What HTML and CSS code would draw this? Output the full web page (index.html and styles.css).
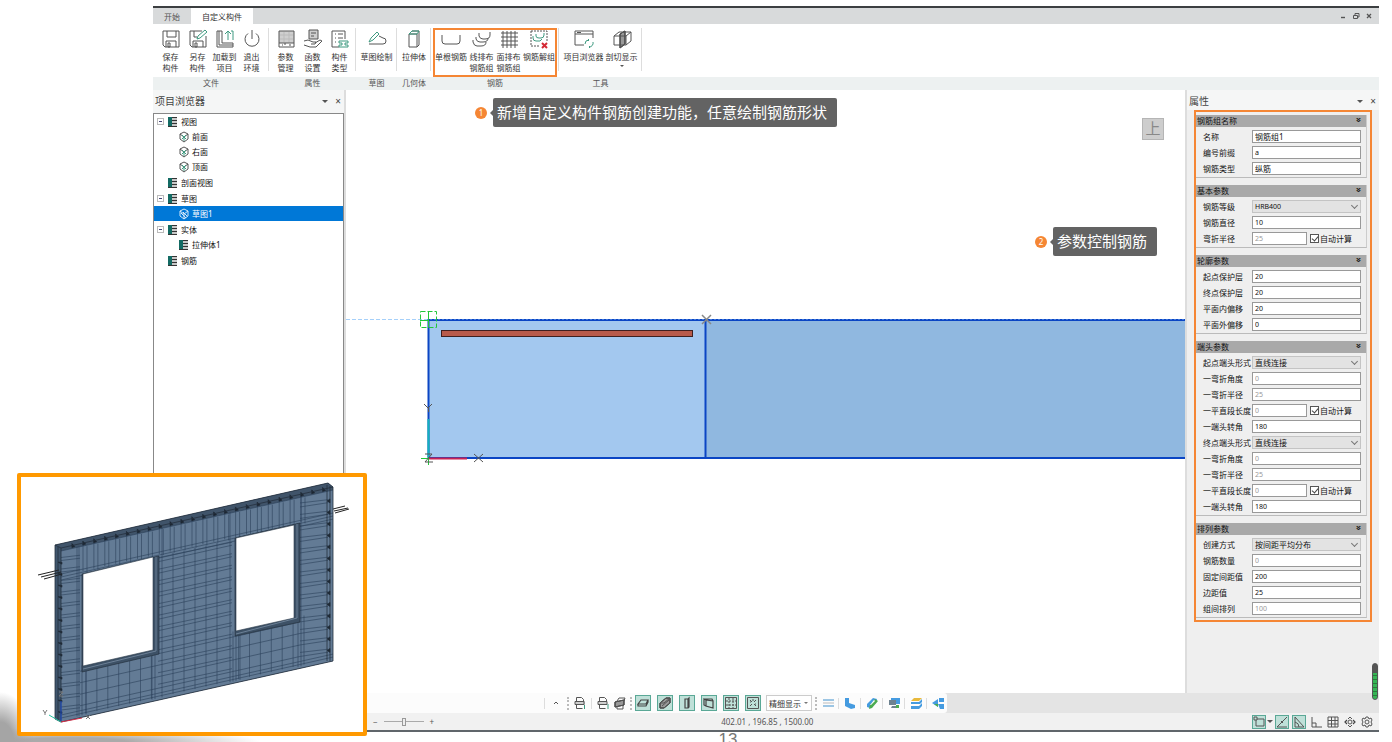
FILE: index.html
```html
<!DOCTYPE html>
<html lang="zh-CN">
<head>
    <meta charset="UTF-8">
    <meta name="viewport" content="width=device-width, initial-scale=1.0">
    <title>自定义构件</title>
    <link rel="stylesheet" href="styles.css">
</head>
<body>
    <div class="app">
        <!-- 标题栏 -->
        <header class="tabs">
            <button class="tab">开始</button>
            <button class="tab active">自定义构件</button>
            <div class="win-btns">
                <button aria-label="最小化"><svg width="8" height="8"><path d="M2 5.5h4" stroke-width="1.4"/></svg></button>
                <button aria-label="还原"><svg width="8" height="8"><path d="M1.5 3.5h4v3h-4zM3 3V1.5h4V5H6"/></svg></button>
                <button aria-label="关闭"><svg width="8" height="8"><path d="M2 2l4 4M6 2L2 6" stroke-width="1.3"/></svg></button>
            </div>
        </header>

        <!-- 功能区 -->
        <nav class="ribbon">
            <div class="group file">
                <div class="btns">
                    <button><svg width="20" height="20"><path d="M2 2h16v16H4l-2-2zM6 2v6h9V2M5 18v-6h10v6M7 14h2v4H7z"/></svg>保存<br>构件</button>
                    <button><svg width="20" height="20"><path d="M14 2H2v14l2 2h14V7M6 2v6h3M5 18v-6h10v6M7 14h2v4H7z"/><path class="green" d="M9 10l1-3 7-6 2 2-7 6z"/></svg>另存<br>构件</button>
                    <button><svg width="20" height="20"><path d="M7 2H2v16h16v-4H7zM4 2v14h14"/><path class="green" d="M13 11V2M10 5l3-3 3 3M16 2h2v9"/></svg>加载到<br>项目</button>
                    <button><svg width="20" height="20"><path d="M6 4.500a7 7 0 1 0 8 0M10 1v9"/></svg>退出<br>环境</button>
                </div>
                <div class="name">文件</div>
            </div>
            <div class="group attr">
                <div class="btns">
                    <button><svg width="20" height="20"><path class="shade" d="M3 2h15v12H3z"/><path d="M3 2h15v16H3zM3 14h15M9 14v2M13 16h2M6 16h1"/><path class="ltgrey" d="M8 3v10M13 3v10M4 6h13M4 10h13"/></svg>参数<br>管理</button>
                    <button><svg width="20" height="20"><path class="shade" d="M6 1h9v9H6z"/><path d="M6 1h9v9H6zM8 4h5M8 7h3M1 12l4-1 5 2h3l-1 2H8M12 14l5-3 2 1-6 6H7l-6-2"/></svg>函数<br>设置</button>
                    <button><svg width="20" height="20"><path d="M9 18H2V2h13v8M5 5h1M8 5h5M5 9h1M8 9h5M5 13h1"/><path class="green" d="M9 12h9v2h-3v2h3v2H9v-2h3v-2H9z"/></svg>构件<br>类型</button>
                </div>
                <div class="name">属性</div>
            </div>
            <div class="group sketch">
                <div class="btns">
                    <button><svg width="20" height="20"><path d="M2 15h14a3 3 0 0 0 0-6l-4-2"/><path class="green" d="M2 13l2-4 6-6 2 2-6 6z"/></svg>草图绘制</button>
                </div>
                <div class="name">草图</div>
            </div>
            <div class="group solid">
                <div class="btns">
                    <button><svg width="20" height="20"><path d="M5 5h8v13H5zM13 18l2-2V2H8L5 5"/><path class="green" d="M5 5l3-3h7l-2 3z"/></svg>拉伸体</button>
                </div>
                <div class="name">几何体</div>
            </div>
            <div class="group rebar">
                <div class="btns">
                    <button><svg width="20" height="20"><path d="M1 6v6q0 3 3 3h12q3 0 3-3V6"/></svg>单根钢筋</button>
                    <button class="mid"><svg width="20" height="20"><path d="M1 11v2q1 4 4 4h4q5 0 5-4M4 8v2q1 3 4 3h3q5 0 5-4M7 4v3q1 3 4 3h2q5 0 5-4V3"/></svg>线排布<br>钢筋组</button>
                    <button class="mid"><svg width="20" height="20"><path d="M4 2v17M8 2v17M12 2v17M16 2v17M2 4h17M2 8h17M2 12h17M2 16h17"/></svg>面排布<br>钢筋组</button>
                    <button><svg width="20" height="20"><path d="M2 2h16v10M2 2v15h9" stroke-dasharray="2 1"/><path class="green" d="M4 7v2q0 3 3 3h4l2-2M7 5v2q0 2 3 2h2q3 0 3-3V4"/><path class="red" d="M13 14l5 5M18 14l-5 5"/></svg>钢筋解组</button>
                </div>
                <div class="name">钢筋</div>
            </div>
            <div class="group tools">
                <div class="btns">
                    <button class="wide"><svg width="20" height="20"><path d="M10 16H1V2h18v7M1 5h18M3 3.500h4"/><path class="green" d="M11 15a4 4 0 0 1 4-4l-1-1M15 11l-1 1M19 13a4 4 0 0 1-4 5l1 1M15 18l1-1"/></svg>项目浏览器</button>
                    <button><svg width="20" height="20"><path class="shade dark" d="M8 5l5-3v13l-5 4z"/><path d="M2 7h12v9H2zM2 7l5-4h12l-5 4M19 3v9l-5 4M8 5v14l5-4V2z"/></svg>剖切显示<br><span class="caret"></span></button>
                </div>
                <div class="name">工具</div>
            </div>
            <div class="group rest"><div class="btns"></div><div class="name"></div></div>
        </nav>

        <main class="work">
            <!-- 项目浏览器 -->
            <aside class="browser">
                <div class="panel-title">项目浏览器<span class="caret"></span><button aria-label="关闭">×</button></div>
                <ul class="tree">
                    <li>
                        <div class="node"><i class="toggle"></i><i class="list"></i>视图</div>
                        <ul>
                            <li class="node"><svg width="12" height="12"><path d="M6 1l4 2v5l-4 3-4-3V3zM2 3l4 3 4-3"/><path class="green" d="M6 6v4M4 4l4 4M8 4L4 8"/></svg>前面</li>
                            <li class="node"><svg width="12" height="12"><path d="M6 1l4 2v5l-4 3-4-3V3zM2 3l4 3 4-3"/><path class="green" d="M6 6v4M4 4l4 4M8 4L4 8"/></svg>右面</li>
                            <li class="node"><svg width="12" height="12"><path d="M6 1l4 2v5l-4 3-4-3V3zM2 3l4 3 4-3"/><path class="green" d="M6 6v4M4 4l4 4M8 4L4 8"/></svg>顶面</li>
                        </ul>
                    </li>
                    <li><div class="node"><i class="toggle none"></i><i class="list"></i>剖面视图</div></li>
                    <li>
                        <div class="node"><i class="toggle"></i><i class="list"></i>草图</div>
                        <ul>
                            <li class="node selected"><svg width="12" height="12"><path d="M6 1l4 2v5l-4 3-4-3V3zM2 3l4 3 4-3M6 6v5M3 5l5 5M5 4l4 4"/></svg>草图1</li>
                        </ul>
                    </li>
                    <li>
                        <div class="node"><i class="toggle"></i><i class="list"></i>实体</div>
                        <ul>
                            <li class="node"><i class="list"></i>拉伸体1</li>
                        </ul>
                    </li>
                    <li><div class="node"><i class="toggle none"></i><i class="list"></i>钢筋</div></li>
                </ul>
            </aside>

            <!-- 绘图区 -->
            <section class="canvas">
                <svg class="drawing" width="100%" height="100%">
                    <g transform="translate(-346 -90)">
                        <path class="guide" d="M346 319.500h82"/>
                        <rect class="face" x="428" y="319" width="277" height="139"/>
                        <rect class="face right" x="705" y="319" width="100%" height="139"/>
                        <rect class="edge" x="428.500" y="320" width="200%" height="138"/>
                        <path class="edge" d="M705.500 320v138"/>
                        <path class="edge-dash" d="M430 319.500h1800"/>
                        <rect class="bar" x="441.500" y="330.500" width="251" height="6"/>
                        <path class="snap" d="M420.500 311.500h16v16h-16z" stroke-dasharray="5 2"/>
                        <path class="snap" d="M428.500 311v16M420 320.500h9M428.500 453v12M421 458.500h8"/>
                        <path class="axis-y" d="M428.500 419v38"/>
                        <path class="axis-x" d="M429 458.500h38"/>
                        <path class="mark" d="M424 404l4 4 4-4M428.500 408v4M474 454l9 8M483 454l-9 8M425 454h7l-7 8h8"/>
                        <path class="mark light" d="M702 315l9 9M711 315l-9 9"/>
                    </g>
                </svg>
                <div class="callout one"><b>1</b><p>新增自定义构件钢筋创建功能，任意绘制钢筋形状</p></div>
                <div class="callout two"><b>2</b><p>参数控制钢筋</p></div>
                <div class="view-cube">上</div>
            </section>

            <!-- 属性 -->
            <aside class="props">
                <div class="panel-title">属性<span class="caret"></span><button aria-label="关闭">×</button></div>
                <form class="sections">
                    <fieldset>
                        <h3>钢筋组名称<span>»</span></h3>
                        <div class="row"><label for="p1">名称</label><input id="p1" type="text" value="钢筋组1"></div>
                        <div class="row"><label for="p2">编号前缀</label><input id="p2" class="num" type="text" value="a"></div>
                        <div class="row"><label for="p3">钢筋类型</label><input id="p3" type="text" value="纵筋"></div>
                    </fieldset>
                    <fieldset>
                        <h3>基本参数<span>»</span></h3>
                        <div class="row"><label for="p4">钢筋等级</label><div class="select"><select id="p4" class="num"><option>HRB400</option></select></div></div>
                        <div class="row"><label for="p5">钢筋直径</label><input id="p5" class="num" type="text" value="10"></div>
                        <div class="row"><label for="p6">弯折半径</label><input id="p6" class="num short" type="text" value="25" disabled><label class="auto"><input type="checkbox" checked>自动计算</label></div>
                    </fieldset>
                    <fieldset>
                        <h3>轮廓参数<span>»</span></h3>
                        <div class="row"><label for="p7">起点保护层</label><input id="p7" class="num" type="text" value="20"></div>
                        <div class="row"><label for="p8">终点保护层</label><input id="p8" class="num" type="text" value="20"></div>
                        <div class="row"><label for="p9">平面内偏移</label><input id="p9" class="num" type="text" value="20"></div>
                        <div class="row"><label for="p10">平面外偏移</label><input id="p10" class="num" type="text" value="0"></div>
                    </fieldset>
                    <fieldset>
                        <h3>端头参数<span>»</span></h3>
                        <div class="row"><label for="p11">起点端头形式</label><div class="select"><select id="p11"><option>直线连接</option></select></div></div>
                        <div class="row"><label for="p12">一弯折角度</label><input id="p12" class="num" type="text" value="0" disabled></div>
                        <div class="row"><label for="p13">一弯折半径</label><input id="p13" class="num" type="text" value="25" disabled></div>
                        <div class="row"><label for="p14">一平直段长度</label><input id="p14" class="num short" type="text" value="0" disabled><label class="auto"><input type="checkbox" checked>自动计算</label></div>
                        <div class="row"><label for="p15">一端头转角</label><input id="p15" class="num" type="text" value="180"></div>
                        <div class="row"><label for="p16">终点端头形式</label><div class="select"><select id="p16"><option>直线连接</option></select></div></div>
                        <div class="row"><label for="p17">一弯折角度</label><input id="p17" class="num" type="text" value="0" disabled></div>
                        <div class="row"><label for="p18">一弯折半径</label><input id="p18" class="num" type="text" value="25" disabled></div>
                        <div class="row"><label for="p19">一平直段长度</label><input id="p19" class="num short" type="text" value="0" disabled><label class="auto"><input type="checkbox" checked>自动计算</label></div>
                        <div class="row"><label for="p20">一端头转角</label><input id="p20" class="num" type="text" value="180"></div>
                    </fieldset>
                    <fieldset>
                        <h3>排列参数<span>»</span></h3>
                        <div class="row"><label for="p21">创建方式</label><div class="select"><select id="p21"><option>按间距平均分布</option></select></div></div>
                        <div class="row"><label for="p22">钢筋数量</label><input id="p22" class="num" type="text" value="0" disabled></div>
                        <div class="row"><label for="p23">固定间距值</label><input id="p23" class="num" type="text" value="200"></div>
                        <div class="row"><label for="p24">边距值</label><input id="p24" class="num" type="text" value="25"></div>
                        <div class="row"><label for="p25">组间排列</label><input id="p25" class="num" type="text" value="100" disabled></div>
                    </fieldset>
                </form>
                <div class="gauge"></div>
            </aside>
        </main>

        <!-- 显示工具条 -->
        <div class="toolbar">
            <div class="tools-strip">
                <i class="sep"></i>
                <button aria-label="展开"><svg width="14" height="14"><path d="M5 8l2-2 2 2"/></svg></button>
                <i class="grip"></i>
                <button aria-label="导入"><svg width="14" height="14"><path class="shade" d="M2 5h10v4H2z"/><path d="M3.500 5V1.500h5l2 2V5M2 5.500h9v3H2zM3.500 9v3.500h6"/><path class="green" d="M11.500 9v4"/></svg></button>
                <i class="sep"></i>
                <button aria-label="导出"><svg width="14" height="14"><path class="shade" d="M2 5h9v4H2z"/><path d="M3.500 5V1.500h5l2 2V5M2 5.500h9v3H2zM3.500 9v3.500h6"/><path class="green" d="M12 8v5"/></svg></button>
                <button class="print" aria-label="打印"><svg width="14" height="14"><path class="shade dark" d="M2 6l9-2v5l-9 2z"/><path d="M4 5l2-3h6l-1 3M2 6l9-2v5l-9 2zM4 11v2h6V9"/></svg></button>
                <i class="grip"></i>
                <button class="on" aria-label="板"><svg width="14" height="14"><path class="bold" d="M2 8l3-4h7l-2 4zM2 8v2h8l2-4V4"/></svg></button>
                <button class="on" aria-label="墙"><svg width="14" height="14"><path class="shade dark" d="M2 7l6-5h4v5l-6 5H2z"/><path d="M2 7l6-5h4L6 7zM2 7v5h4l6-5V2M4 10l7-6"/></svg></button>
                <button class="on" aria-label="柱"><svg width="14" height="14"><path class="bold" d="M5 3h3v9H5zM8 3l1-1v9l-1 1"/></svg></button>
                <button class="on" aria-label="梁"><svg width="14" height="14"><path class="bold" d="M4 4v6l7 2V5zM4 4L2 3v6l2 1M2 3h8l1 2"/></svg></button>
                <button class="on" aria-label="网格"><svg width="14" height="14"><path d="M1.500 1.500h11v11h-11z"/><path d="M2 5h10M2 9h10M5 2v10M9 2v10" stroke-dasharray="2 1"/></svg></button>
                <button class="on" aria-label="节点"><svg width="14" height="14"><path d="M1.500 1.500h11v11h-11z"/><path d="M4 4l2 2M10 4L8 6M4 10l2-2M10 10L8 8M4 6h1M9 8h1M6 4h2"/></svg></button>
                <div class="select detail"><select aria-label="显示精度"><option>精细显示</option></select></div>
                <i class="grip"></i>
                <button class="far" aria-label="标注"><svg width="14" height="14"><path class="blue" d="M2 4h11M2 10h11"/><path class="ltgrey" d="M2 7h11"/></svg></button>
                <i class="sep"></i>
                <button class="far" aria-label="角钢"><svg width="14" height="14"><path class="bluefill" d="M2 2h4v5l6 2v3l-4 1-6-3z"/></svg></button>
                <i class="sep"></i>
                <button class="far" aria-label="编辑"><svg width="14" height="14"><path class="bluefill" d="M2 8l6-6 4 1-1 4-6 5-3-1z"/><path class="greenfill" d="M5 9l5-6 3 2-6 7-3 1z"/><path class="whitefill" d="M5 9l4-5 1 1-4 4z"/></svg></button>
                <i class="sep"></i>
                <button class="far" aria-label="显示器"><svg width="14" height="14"><path class="bluefill" d="M4 2h9v6H4z"/><path class="greyfill" d="M2 4h7v5H2zM5 10h5v2H4z"/><path class="greenfill" d="M9 9h3v3H9z"/></svg></button>
                <i class="sep"></i>
                <button class="far" aria-label="图层"><svg width="14" height="14"><path class="yellowfill" d="M2 5l3-3h8l-3 3z"/><path class="bluefill" d="M2 6h8l3-3v3l-2 2H2zM2 10h8l3-3v3l-3 3H2z"/></svg></button>
                <i class="sep"></i>
                <button class="far" aria-label="共享"><svg width="14" height="14"><path class="bluefill" d="M1 7l6-4v8zM8 2h5v4H8zM7 8h6v5H9z"/><path class="greenfill" d="M3 8h4v3z"/></svg></button>
            </div>
        </div>

        <!-- 状态栏 -->
        <footer class="status">
            <div class="zoom"><span>−</span><input type="range" aria-label="缩放" value="50"><span>+</span></div>
            <div class="coords">402.01 , 196.85 , 1500.00</div>
            <div class="modes">
                <button class="on" aria-label="捕捉"><svg width="12" height="12"><path d="M1 1h3v3H1zM4 3h7v7H3V4"/></svg></button>
                <span class="caret"></span>
                <button class="on" aria-label="端点"><svg width="12" height="12"><path d="M1 11L11 1M5 5l2 2M1 11h10"/></svg></button>
                <button class="on" aria-label="极轴"><svg width="12" height="12"><path d="M2 1v10h9M2 1l9 10M2 6q4 1 4 5"/></svg></button>
                <button aria-label="正交"><svg width="12" height="12"><path d="M2 1v10h10M2 7h4v4"/></svg></button>
                <button aria-label="栅格"><svg width="12" height="12"><path d="M1 1h10v10H1zM1 4.500h10M1 8h10M4.500 1v10M8 1v10"/></svg></button>
                <button aria-label="移动"><svg width="12" height="12"><path d="M6 4a2 2 0 1 0 0 4 2 2 0 0 0 0-4zM4 3l2-2 2 2M4 9l2 2 2-2"/><path class="bold" d="M3 4L1 6l2 2M9 4l2 2-2 2"/></svg></button>
                <button aria-label="设置"><svg width="12" height="12"><path d="M5 1h2l1 2 2-1 1 2-1 2 1 2-1 2-2-1-1 2H5L4 9l-2 1-1-2 1-2-1-2 1-2 2 1zM6 4a2 2 0 1 0 0 4 2 2 0 0 0 0-4z"/></svg></button>
            </div>
        </footer>
    </div>
    <div class="page-no">13</div>

    <!-- 三维预览 -->
    <div class="mist"></div>
    <div class="preview">
        <svg viewBox="21 477 342 255">
            <defs>
                <clipPath id="wall"><path clip-rule="evenodd" d="M61 548L333 487V661L61 722zM82 574V672L159 654V556zM235 538V636L300 622V523z"/></clipPath>
            </defs>
            <path class="side" d="M55 545L328 483L333 487V661L61 722L55 719z"/>
            <path class="front" d="M61 548L333 487V661L61 722z"/>
            <path class="top-face" d="M55 545L328 483L333 487V490L61 551z"/>
            <g id="mesh" clip-path="url(#wall)"></g>
            <g id="ties"></g>
            <path class="frame" d="M82 574L159 556V654L82 672zM235 538L300 523V622L235 636z"/>
            <path class="hole" d="M83 574L153 557V650L83 666zM236 538L294 525V618L236 631z"/>
            <path class="frame-line" d="M156 557v94L83 669M297 524v94L236 634"/>
            <path class="dark" d="M38 575l21-5M41 577l20-5M44 579l18-5M333 509l12-3M334 511l14-3M335 513l14-4"/>
            <path class="outline" d="M55 545L328 483L333 487L61 548zM55 545V719L61 722V548M61 722L333 661V487M58 547V720M327 485V661M330 486V661"/>
            <path d="M61 721V701" stroke="#1d4fd0"/>
            <path d="M61 722L82 718" stroke="#d8304a"/>
            <path d="M61 722L49 715" stroke="#25c2a0"/>
            <path d="M43 710l2 3 2-3M45 713v2M86 715l4 4M90 715l-4 4M59 692h4l-4 4h4" stroke="#777"/>
        </svg>
    </div>
    <script src="mesh.js"></script>
</body>
</html>
```
FILE: styles.css
```css
* {
    box-sizing: border-box;
}
body {
    margin: 0;
    position: relative;
    min-height: 100vh;
    overflow: hidden;
    background: white;
    color: #333;
    font-family: "Noto Sans", "Noto Sans CJK SC", sans-serif;
    font-size: 8px;
    line-height: 11px;
}
button, input, select {
    font-family: inherit;
    font-size: 8px;
    line-height: 11px;
    color: inherit;
}
button {
    margin: 0;
    padding: 0;
    border: none;
    background: none;
}
svg {
    display: block;
    fill: none;
    stroke: #555;
    stroke-width: 1;
}
ul {
    margin: 0;
    padding: 0;
    list-style: none;
}
.green { stroke: #3f9a80; }
.red { stroke: #d42a35; stroke-width: 2; }
.shade { fill: #cfcfcf; stroke: none; }
.shade.dark { fill: #999; }
.bold { stroke: #444; stroke-width: 1.2; }
.blue { stroke: #7eb4dc; stroke-width: 1.5; }
.ltgrey { stroke: #bbb; }
.bluefill { fill: #459be0; stroke: none; }
.greenfill { fill: #4cab50; stroke: none; }
.greyfill { fill: #6d8290; stroke: none; }
.yellowfill { fill: #e8b93c; stroke: none; }
.whitefill { fill: white; stroke: none; }
.caret {
    display: inline-block;
    border: 3px solid transparent;
    border-top-color: #555;
    border-bottom: none;
}

.app {
    display: flex;
    flex-direction: column;
    min-height: calc(100vh - 16px);
    margin: 6px 13px 0 153px;
    border-top: 2px solid #3c3f41;
    border-bottom: 2px solid #60666b;
}

/* 标题栏 */
.tabs {
    display: flex;
    height: 16px;
    background: #d8dadb;
}
.tab {
    width: 38px;
    color: #555;
}
.tab.active {
    width: 62px;
    background: white;
    color: #333;
}
.win-btns {
    display: flex;
    gap: 5px;
    align-items: center;
    margin-left: auto;
    padding-right: 6px;
}

/* 功能区 */
.ribbon {
    display: flex;
    height: 66px;
    background: white;
}
.group {
    position: relative;
    display: flex;
    flex-direction: column;
}
.btns {
    display: flex;
    justify-content: center;
    flex: 1;
    padding-top: 5px;
}
.btns::after {
    content: "";
    position: absolute;
    top: 4px;
    right: 0;
    height: 43px;
    border-right: 1px solid #ddd;
}
.btns button {
    display: block;
    width: 27px;
    align-self: flex-start;
    text-align: center;
    white-space: nowrap;
}
.btns svg {
    margin: 0 auto 2px;
}
.btns .caret {
    border-width: 2px;
    border-bottom: none;
    vertical-align: 4px;
}
.name {
    height: 13px;
    background: #edf1f1;
    text-align: center;
    line-height: 12px;
    color: #555;
}
.file { width: 116px; }
.attr { width: 87px; }
.sketch { width: 41px; }
.solid { width: 34px; }
.rebar { width: 128px; }
.tools { width: 83px; }
.rest { flex: 1; }
.rest .btns::after { display: none; }
.sketch button, .rebar button, .tools button {
    width: 34px;
}
.rebar .mid { width: 27px; }
.tools .wide { width: 42px; }
.rebar::after {
    content: "";
    position: absolute;
    inset: 4px 2px 13px 2px;
    border: 2px solid #f58634;
}

/* 工作区 */
.work {
    display: flex;
    flex: 1;
}
.panel-title {
    display: flex;
    align-items: center;
    gap: 6px;
    height: 23px;
    padding: 0 2px;
    background: #f5f6f6;
    font-size: 10px;
    color: #444;
}
.panel-title .caret {
    margin-left: auto;
}
.panel-title button {
    width: 8px;
    font-size: 10px;
}
.browser {
    display: flex;
    flex-direction: column;
    width: 193px;
    border-right: 2px solid #ddd;
}
.tree {
    flex: 1;
    border: 1px solid #888;
    border-bottom: none;
    background: white;
    color: #111;
}
.tree > li {
    margin-bottom: 1px;
}
.node {
    display: flex;
    align-items: center;
    gap: 4px;
    height: 15px;
    padding-left: 3px;
}
.tree ul .node {
    gap: 2px;
    padding-left: 24px;
}
.node.selected {
    background: #0078d7;
    color: white;
}
.selected svg {
    stroke: #d5e8f8;
}
.tree ul .list {
    margin: 0 2px 0 1px;
}
.toggle {
    width: 7px;
    height: 7px;
    border: 1px solid #bbb;
    background: linear-gradient(#447, #447) center / 3px 1px no-repeat;
}
.toggle.none {
    visibility: hidden;
}
.list {
    width: 9px;
    height: 10px;
    background: linear-gradient(90deg, #136b64 4px, transparent 4px), repeating-linear-gradient(#333 0 1px, #c8c8c8 1px 3px);
    border-bottom: 1px solid #333;
}

/* 绘图区 */
.canvas {
    position: relative;
    flex: 1;
    min-width: 0;
    overflow: hidden;
    border-right: 2px solid #ddd;
}
.drawing {
    position: absolute;
    inset: 0;
}
.guide { stroke: #a5d0fa; stroke-dasharray: 4 2; }
.face { fill: #a3c8ef; stroke: none; }
.face.right { fill: #90b8e0; }
.edge { stroke: #0b45c4; stroke-width: 2; }
.edge-dash { stroke: #3f78dc; stroke-dasharray: 2 2; }
.bar { fill: #b85b4b; stroke: #3e2020; }
.snap { stroke: #21c63a; }
.axis-y { stroke: #13b3bd; stroke-width: 2; }
.axis-x { stroke: #c82355; stroke-width: 2; }
.mark { stroke: #555; }
.mark.light { stroke: #888; stroke-width: 1.5; }
.callout {
    position: absolute;
    display: flex;
    align-items: center;
    gap: 6px;
}
.callout.one {
    left: 129px;
    top: 8px;
}
.callout.two {
    right: 28px;
    top: 137px;
}
.callout b {
    width: 12px;
    height: 12px;
    border-radius: 50%;
    background: #f58634;
    color: white;
    text-align: center;
    font-weight: normal;
    line-height: 12px;
}
.callout p {
    position: relative;
    margin: 0;
    padding: 0 10px 0 4px;
    border-radius: 2px;
    background: #636363;
    color: white;
    font-size: 15px;
    line-height: 29px;
}
.callout p::before {
    content: "";
    position: absolute;
    left: -3px;
    top: 12px;
    border: 3px solid transparent;
    border-right-color: #636363;
    border-left: none;
}
.view-cube {
    position: absolute;
    right: 21px;
    top: 28px;
    width: 22px;
    height: 22px;
    border: 1px solid #b5b5b5;
    background: #cdcdcd;
    color: #888;
    font-size: 15px;
    line-height: 19px;
    text-align: center;
}

/* 属性 */
.props {
    position: relative;
    width: 192px;
    padding-bottom: 60px;
    background: #efefef;
}
.props .panel-title {
    height: 20px;
    padding-top: 2px;
}
.sections {
    display: flex;
    flex-direction: column;
    gap: 7px;
    margin: 0 7px;
    padding: 3px 3px 2px 0;
    border: 2px solid #f58634;
    color: #111;
}
fieldset {
    min-width: 0;
    margin: 0;
    padding: 0 0 1px;
    border: none;
    border-bottom: 1px solid #bbb;
    border-right: 1px solid #ccc;
}
h3 {
    display: flex;
    justify-content: space-between;
    height: 12px;
    margin: 0 0 1px;
    padding: 0 3px 0 1px;
    background: #a9a9a9;
    font-size: 8px;
    font-weight: normal;
    line-height: 12px;
}
h3 span {
    width: 8px;
    height: 10px;
    transform: rotate(90deg);
    font-weight: bold;
    line-height: 10px;
    text-align: center;
}
.row {
    display: flex;
    align-items: center;
    height: 16px;
    padding: 0 5px 0 7px;
    white-space: nowrap;
}
.row > label:first-child {
    width: 49px;
}
.row > input, .select {
    flex: 1;
    min-width: 0;
    height: 13px;
}
.row > input, select {
    padding: 0 2px;
    border: 1px solid #999;
    border-radius: 0;
    background: white;
}
.row > .short {
    flex: none;
    width: 55px;
}
.row .num {
    font-size: 7px;
}
input:disabled {
    color: #999;
}
.select {
    position: relative;
}
select {
    display: block;
    appearance: none;
    width: 100%;
    height: 100%;
}
.row select {
    border-color: #c4c4c4;
    background: #e3e3e3;
}
.row .select::after {
    content: "";
    position: absolute;
    right: 4px;
    top: 3px;
    width: 4px;
    height: 4px;
    border: solid #777;
    border-width: 0 1px 1px 0;
    transform: rotate(45deg);
    pointer-events: none;
}
.auto {
    display: flex;
    align-items: center;
    gap: 1px;
    margin-left: 3px;
}
.auto input {
    position: relative;
    appearance: none;
    width: 9px;
    height: 9px;
    margin: 0;
    border: 1px solid #555;
    background: white;
}
.auto input:checked::after {
    content: "";
    position: absolute;
    left: 2px;
    top: 0;
    width: 3px;
    height: 5px;
    border: solid #444;
    border-width: 0 1px 1px 0;
    transform: rotate(40deg);
}
.gauge {
    position: absolute;
    right: 1px;
    bottom: -7px;
    width: 6px;
    height: 37px;
    border: 1px solid #555;
    border-radius: 3px;
    background: linear-gradient(#555 9px, transparent 9px), repeating-linear-gradient(#35b554 0 3px, #2b7a3c 3px 4px);
}

/* 显示工具条 */
.toolbar {
    height: 20px;
    background: #e4e4e4;
}
.tools-strip {
    display: flex;
    align-items: center;
    gap: 3px;
    width: 794px;
    height: 20px;
    padding-left: 391px;
    border-radius: 0 3px 3px 0;
    background: #fcfcfc;
}
.tools-strip button {
    flex: none;
    width: 16px;
    height: 16px;
}
.tools-strip svg {
    margin: 0 auto;
}
.tools-strip .print {
    margin: 0 -1px 0 -2px;
}
.tools-strip .on {
    margin-right: 3px;
}
.on {
    border: 1px solid #5aa896;
    background: #bfe0d8;
}
.sep {
    height: 11px;
    border-left: 1px solid #ddd;
}
.grip {
    height: 13px;
    border-left: 2px dotted #bbb;
}
.tools-strip .detail {
    flex: none;
    width: 46px;
    height: 16px;
    margin-left: -1px;
}
.detail select {
    border-color: #ccc;
}
.detail::after {
    content: "";
    position: absolute;
    right: 4px;
    top: 7px;
    border: 2px solid transparent;
    border-top-color: #777;
    border-bottom: none;
}
.tools-strip .far {
    width: 15px;
}

/* 状态栏 */
.status {
    display: flex;
    align-items: center;
    height: 17px;
    background: #f1f1f1;
    color: #555;
}
.zoom {
    display: flex;
    align-items: center;
    gap: 6px;
    margin-left: 220px;
}
.zoom input {
    appearance: none;
    width: 40px;
    height: 9px;
    margin: 0;
    background: linear-gradient(#aaa, #aaa) center / 100% 1px no-repeat;
}
.zoom input::-webkit-slider-thumb {
    appearance: none;
    width: 4px;
    height: 8px;
    border: 1px solid #999;
    background: #eee;
}
.coords {
    margin-left: 287px;
}
.modes {
    display: flex;
    align-items: center;
    gap: 3px;
    margin-left: auto;
    padding-right: 5px;
}
.modes button {
    width: 14px;
    height: 14px;
}
.modes .caret {
    margin: 0 -1px 0 -2px;
}
.modes svg {
    margin: 0 auto;
}

.page-no {
    height: 10px;
    padding-left: 64px;
    overflow: hidden;
    color: #777;
    font-family: "Liberation Sans", sans-serif;
    font-size: 17px;
    line-height: 15px;
    text-align: center;
}

/* 三维预览 */
.mist {
    position: absolute;
    left: 0;
    bottom: 0;
    width: 260px;
    height: 60px;
    background: radial-gradient(ellipse 34px 50px at 0 60px, #a5a5a5 40%, transparent), radial-gradient(ellipse 190px 14px at 70px 60px, #aaa 30%, transparent);
}
.preview {
    position: absolute;
    left: 17px;
    bottom: 6px;
    width: 350px;
    height: 263px;
    border: 4px solid #ff9900;
    border-radius: 2px;
    background: white;
}
.preview svg {
    width: 100%;
    height: 100%;
}
.side { fill: #40566e; stroke: none; }
.front { fill: #637b95; stroke: none; }
.top-face { fill: #40546a; stroke: none; }
.frame { fill: #3d5166; stroke: #1f2a36; stroke-width: 0.6; }
.frame-line { stroke: #6c8096; }
.hole { fill: white; stroke: #2b3a4a; stroke-width: 0.6; }
.dark { stroke: #222; }
.outline { stroke: #25303d; stroke-width: 0.8; }
#mesh { stroke: #2c415a; stroke-width: 0.6; }
#ties { fill: #1d2732; stroke: #1d2732; stroke-width: 0.6; }
```
FILE: mesh.js
```js
// 墙面坐标: x 为水平位置, v 为距墙底高度
function yAt(x, v) {
    return 722 - 0.224 * (x - 61) - v;
}

function line(x1, v1, x2, v2) {
    return "M" + x1 + " " + yAt(x1, v1) + "L" + x2 + " " + yAt(x2, v2);
}

function addPath(id, d) {
    var path = document.createElementNS("http://www.w3.org/2000/svg", "path");
    path.setAttribute("d", d);
    document.getElementById(id).appendChild(path);
}

var d = "";
var i, v, x;

// 通长水平钢筋
[4, 7, 142, 145, 148, 171].forEach(function (h) {
    d += line(61, h, 333, h);
});

// 连梁箍筋和窗下竖向钢筋
for (i = 0; i < 21; i++) {
    x = 83 + i * 10.9;
    d += line(x, 146, x, 174) + line(x + 4, 144, x + 4, 170);
    if (x < 159 || x > 232) {
        d += line(x + 3, 3, x + 3, 52);
    }
}

// 中间墙肢
for (i = 0; i < 5; i++) {
    d += line(173 + i * 11, 3, 173 + i * 11, 144);
}
[77, 79, 162, 230, 301].forEach(function (c) {
    d += line(c, 2, c, 172);
});
[82, 86, 152, 155, 233, 236, 240, 298].forEach(function (c) {
    d += line(c, 2, c, 52);
});

// 各墙肢水平箍筋
for (v = 12; v < 172; v += 11.5) {
    d += line(61, v, 80, v - 2) + line(61, v + 3, 80, v + 1);
    if (v < 142) {
        d += line(158, v, 232, v) + line(158, v + 4, 232, v + 3);
    }
    d += line(300, v, 328, v - 2) + line(300, v + 4, 328, v + 1);
    if (v < 50) {
        d += line(80, v, 158, v) + line(232, v, 300, v);
    }
}
addPath("mesh", d);

// 墙顶拉筋和边缘弯钩
d = "";
for (i = 1; i < 25; i++) {
    x = 61 + i * 10.9;
    d += "M" + x + " " + yAt(x, 176) + "v4l3 -1z";
}
for (v = 12; v < 172; v += 11.5) {
    d += "M58 " + (yAt(58, v) + 1) + "l4 2v-2z";
    d += "M327 " + yAt(327, v) + "l3 -2v4z";
}
addPath("ties", d);
```
